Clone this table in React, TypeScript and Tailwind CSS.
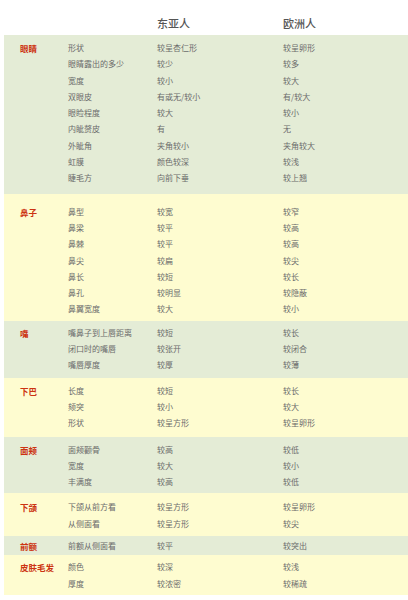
import React from "react";

type Section = {
  name: string;
  tone: "green" | "yellow";
  pad: string;
  rows: [string, string, string][];
};

const SECTIONS: Section[] = [
  {
    name: "眼睛",
    tone: "green",
    pad: "pt-[5px] pb-[7px]",
    rows: [
      ["形状", "较呈杏仁形", "较呈卵形"],
      ["眼睛露出的多少", "较少", "较多"],
      ["宽度", "较小", "较大"],
      ["双眼皮", "有或无/较小", "有/较大"],
      ["眼睑程度", "较大", "较小"],
      ["内眦赘皮", "有", "无"],
      ["外眦角", "夹角较小", "夹角较大"],
      ["虹膜", "颜色较深", "较浅"],
      ["睫毛方", "向前下垂", "较上翘"],
    ],
  },
  {
    name: "鼻子",
    tone: "yellow",
    pad: "pt-[10px] pb-[3px]",
    rows: [
      ["鼻型", "较宽", "较窄"],
      ["鼻梁", "较平", "较高"],
      ["鼻棘", "较平", "较高"],
      ["鼻尖", "较扁", "较尖"],
      ["鼻长", "较短", "较长"],
      ["鼻孔", "较明显", "较隐蔽"],
      ["鼻翼宽度", "较大", "较小"],
    ],
  },
  {
    name: "嘴",
    tone: "green",
    pad: "pt-[4px] pb-[4px]",
    rows: [
      ["嘴鼻子到上唇距离", "较短", "较长"],
      ["闭口时的嘴唇", "较张开", "较闭合"],
      ["嘴唇厚度", "较厚", "较薄"],
    ],
  },
  {
    name: "下巴",
    tone: "yellow",
    pad: "pt-[5px] pb-[5px]",
    rows: [
      ["长度", "较短", "较长"],
      ["颏突", "较小", "较大"],
      ["形状", "较呈方形", "较呈卵形"],
    ],
  },
  {
    name: "面颊",
    tone: "green",
    pad: "pt-[5px] pb-[3px]",
    rows: [
      ["面颊颧骨", "较高", "较低"],
      ["宽度", "较大", "较小"],
      ["丰满度", "较高", "较低"],
    ],
  },
  {
    name: "下颌",
    tone: "yellow",
    pad: "pt-[6px] pb-[4px]",
    rows: [
      ["下颌从前方看", "较呈方形", "较呈卵形"],
      ["从侧面看", "较呈方形", "较尖"],
    ],
  },
  {
    name: "前额",
    tone: "green",
    pad: "pt-[2px] pb-[1px]",
    rows: [["前额从侧面看", "较平", "较突出"]],
  },
  {
    name: "皮肤毛发",
    tone: "yellow",
    pad: "pt-[4px] pb-[3px]",
    rows: [
      ["颜色", "较深", "较浅"],
      ["厚度", "较浓密", "较稀疏"],
    ],
  },
];

function FeatureSection({ section }: { section: Section }) {
  return (
    <section
      className={
        (section.tone === "green" ? "bg-[#e4ecd6] " : "bg-[#fefcd0] ") +
        "ml-[4px] pl-[16px] " +
        section.pad
      }
    >
      {section.rows.map((row, i) => (
        <div
          key={i}
          className="grid grid-cols-[48px_89px_126px_1fr] h-[16.3px] leading-[16.3px] text-[8px] text-[#6b6b6b]"
        >
          <span className="font-bold text-[8.5px] text-[#cc3311]">
            {i === 0 ? section.name : ""}
          </span>
          <span>{row[0]}</span>
          <span>{row[1]}</span>
          <span>{row[2]}</span>
        </div>
      ))}
    </section>
  );
}

export default function App() {
  return (
    <div
      className="w-[408px] h-[600px] bg-white overflow-hidden"
      style={{ fontFamily: '"Noto Sans CJK SC", "Noto Sans", sans-serif' }}
    >
      <header className="h-[35px] pt-[15px] grid grid-cols-[157px_126px_1fr] text-[11px] leading-[16px] font-medium text-[#555555]">
        <span />
        <span>东亚人</span>
        <span>欧洲人</span>
      </header>
      {SECTIONS.map((s) => (
        <FeatureSection key={s.name} section={s} />
      ))}
    </div>
  );
}
